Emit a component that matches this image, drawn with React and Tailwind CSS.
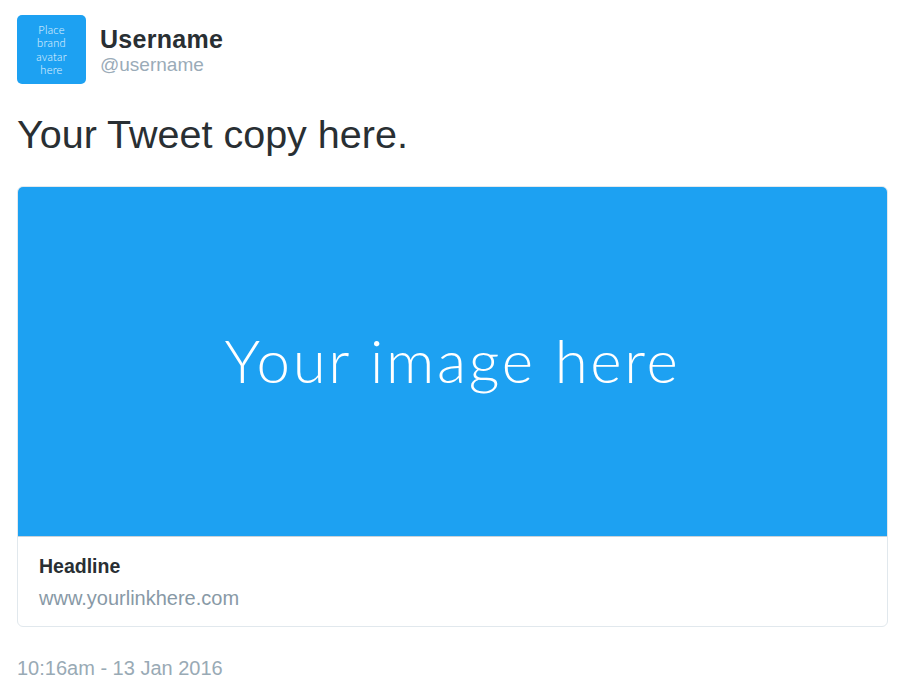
export default function App() {
  return (
    <div className="min-h-screen bg-white px-[17px] pt-[15px] font-['Liberation_Sans',Arial,sans-serif] text-[#292f33]">
      {/* Header */}
      <div className="flex items-start gap-[14px]">
        <div className="flex h-[69px] w-[69px] shrink-0 items-center justify-center rounded-[5px] bg-[#1da1f2]">
          <p className="text-center font-['Lato',sans-serif] text-[11px] font-light leading-[13.3px] tracking-[0.3px] text-white/90">
            Place
            <br />
            brand
            <br />
            avatar
            <br />
            here
          </p>
        </div>
        <div className="pt-[10px]">
          <div className="text-[25px] font-bold leading-[28px] tracking-[0.3px]">Username</div>
          <div className="mt-[1px] text-[19px] leading-[22px] text-[#9aabb8]">@username</div>
        </div>
      </div>

      {/* Tweet copy */}
      <p className="mt-[27px] text-[39.5px] leading-[46px]">Your Tweet copy here.</p>

      {/* Card */}
      <div className="mt-[29px] overflow-hidden rounded-[6px] border border-[#e1e8ed]">
        <div className="flex h-[349px] items-center justify-center bg-[#1da1f2]">
          <span className="pb-[4px] font-['Lato',sans-serif] text-[60px] font-light tracking-[2.7px] text-white">
            Your image here
          </span>
        </div>
        <div className="border-t border-[#c9d2d9] px-[21px] pb-[16px] pt-[17px]">
          <div className="text-[19.5px] font-bold leading-[24px]">Headline</div>
          <div className="mt-[8px] text-[20px] leading-[24px] text-[#8899a6]">www.yourlinkhere.com</div>
        </div>
      </div>

      {/* Timestamp */}
      <p className="mt-[29px] text-[20px] leading-[24px] text-[#99aab5]">10:16am - 13 Jan 2016</p>
    </div>
  );
}
